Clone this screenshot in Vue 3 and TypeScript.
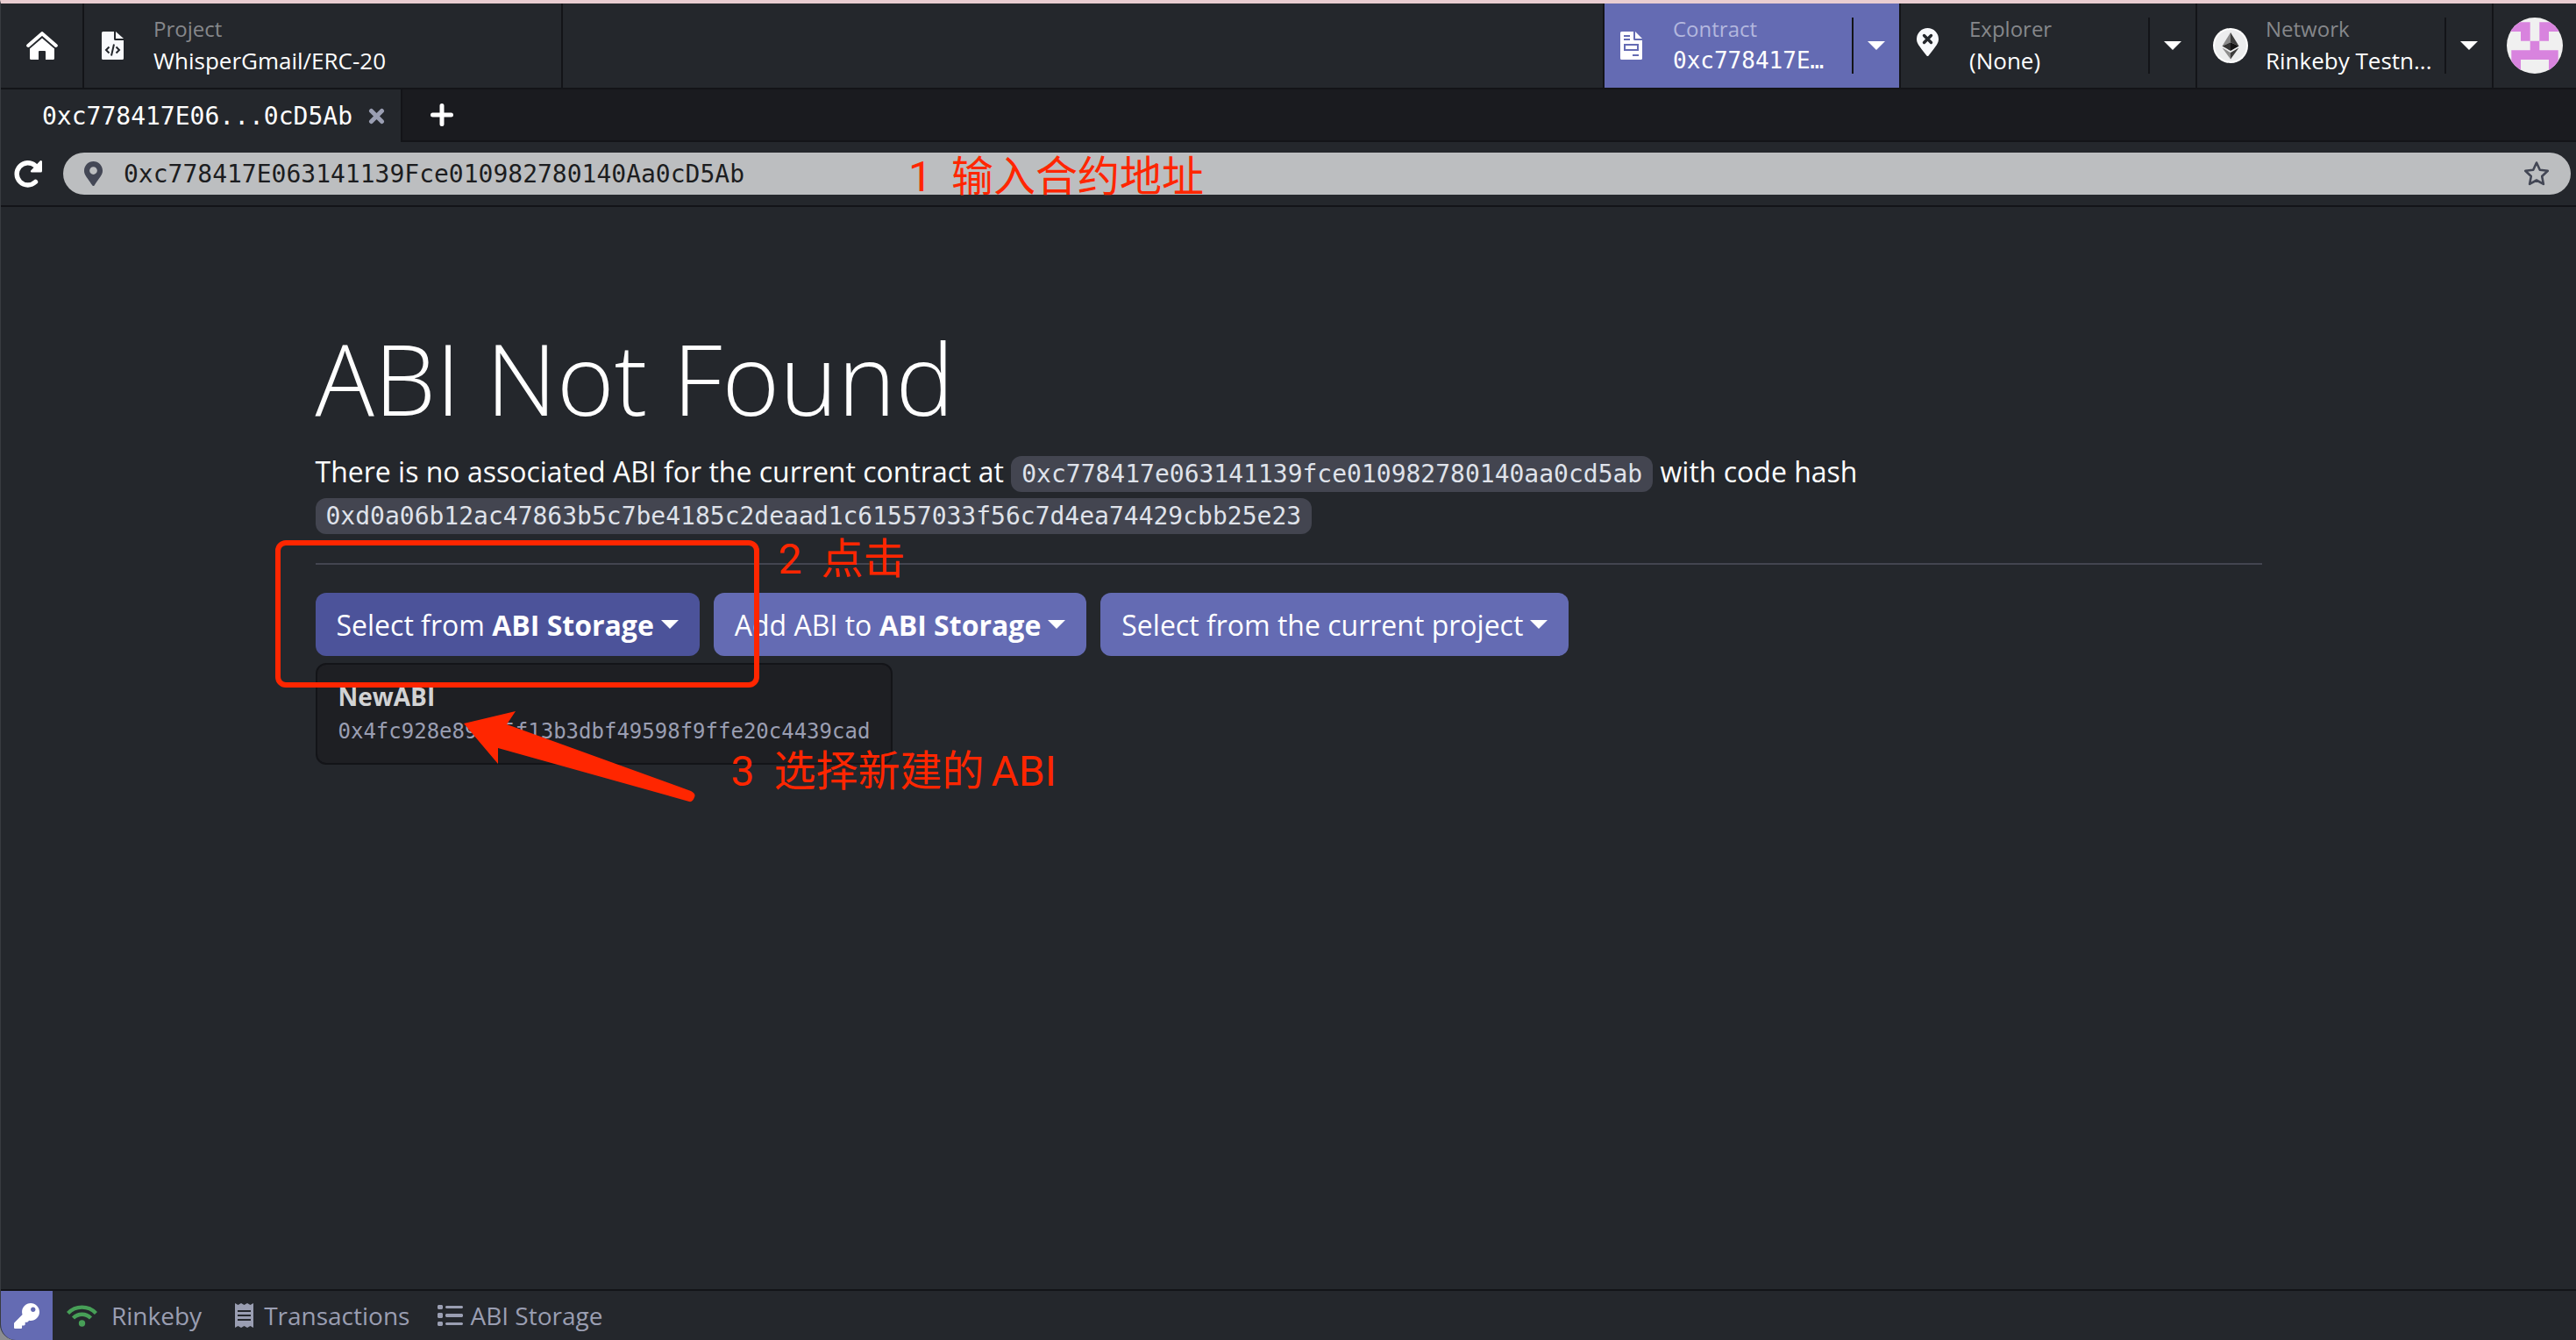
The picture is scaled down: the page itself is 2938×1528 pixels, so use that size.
<script setup lang="ts">
import { ref } from 'vue'

interface NavCell {
  id: string
  label: string
  value: string
  mono?: boolean
  active?: boolean
}

const address = ref('0xc778417E063141139Fce010982780140Aa0cD5Ab')

const cells: NavCell[] = [
  { id: 'contract', label: 'Contract', value: '0xc778417E…', mono: true, active: true },
  { id: 'explorer', label: 'Explorer', value: '(None)' },
  { id: 'network', label: 'Network', value: 'Rinkeby Testn...' },
]

const storedAbi = {
  name: 'NewABI',
  hash: '0x4fc928e89435f13b3dbf49598f9ffe20c4439cad',
}
</script>

<template>
  <div class="app">
    <header class="topbar">
      <button class="home" aria-label="Home">
        <svg width="36" height="32" viewBox="0 0 36 32">
          <path fill="none" stroke="#fff" stroke-width="4" stroke-linecap="round" stroke-linejoin="round" d="M2.200 16 18 2.200 33.800 16" />
          <path fill="#fff" d="M18 7.400 32 19.600V30.500a1.500 1.500 0 0 1-1.500 1.500H22v-9a1 1 0 0 0-1-1h-6a1 1 0 0 0-1 1v9H5.500A1.500 1.500 0 0 1 4 30.500V19.600z" />
        </svg>
      </button>

      <button class="project">
        <svg width="25" height="32" viewBox="0 0 25 32">
          <path fill="#f8f9fc" d="M1.500 0H14v8.500A1.500 1.500 0 0 0 15.500 10H25v20.500a1.500 1.500 0 0 1-1.500 1.500h-22A1.500 1.500 0 0 1 0 30.500v-29A1.500 1.500 0 0 1 1.500 0zM16 0l9 8H16z" />
          <path fill="none" stroke="#24272c" stroke-width="2" d="M8.500 17.500 5 21l3.500 3.500M16.500 17.500 20 21l-3.500 3.500M14 14.500 11 27.500" />
        </svg>
        <span class="stack">
          <span class="label">Project</span>
          <span class="value">WhisperGmail/ERC-20</span>
        </span>
      </button>

      <div class="spacer"></div>

      <div v-for="cell in cells" :key="cell.id" class="cell" :class="{ active: cell.active }">
        <button class="cell-main">
          <span class="cell-icon">
            <svg v-if="cell.id === 'contract'" width="25" height="32" viewBox="0 0 25 32">
              <path fill="#fff" fill-rule="evenodd" d="M1.500 0H15v8.500A1.500 1.500 0 0 0 16.500 10H25v20.500a1.500 1.500 0 0 1-1.500 1.500h-22A1.500 1.500 0 0 1 0 30.500v-29A1.500 1.500 0 0 1 1.500 0zM17 0l8 8h-8zM4 4v2h7V4zM4 8v2h7V8zM4 14v8h17v-8zM6 16h13v4H6zM14 26v2h7v-2z" />
            </svg>
            <svg v-else-if="cell.id === 'explorer'" class="pin" width="25" height="32" viewBox="0 0 25 32">
              <path fill="#f8f9fc" d="M12.500 0A12.500 12.500 0 0 0 0 12.500C0 17 2 19.500 11.200 31.300a1.700 1.700 0 0 0 2.600 0C23 19.500 25 17 25 12.500A12.500 12.500 0 0 0 12.500 0z" />
              <path stroke="#24272c" stroke-width="3.400" stroke-linecap="round" d="m8.500 8.500 8 8m0-8-8 8" />
            </svg>
            <svg v-else width="40" height="40" viewBox="0 0 40 40">
              <circle cx="20" cy="20" r="20" fill="#fff" />
              <circle cx="20" cy="20" r="18" fill="#ecedee" />
              <path fill="#8a8a8a" d="M20 5v11.300L10.500 20.600z" />
              <path fill="#3c3c3b" d="M20 5v11.300l9.500 4.300z" />
              <path fill="#343434" d="m10.500 20.600 9.500-4.300V26z" />
              <path fill="#131313" d="M29.500 20.600 20 16.300V26z" />
              <path fill="#8c8c8c" d="m10.500 22.600 9.500 5.400v7.500z" />
              <path fill="#3c3c3b" d="M29.500 22.600 20 28v7.500z" />
            </svg>
          </span>
          <span class="stack">
            <span class="label">{{ cell.label }}</span>
            <span class="value" :class="{ mono: cell.mono }">{{ cell.value }}</span>
          </span>
        </button>
        <button class="cell-toggle" :aria-label="`${cell.label} menu`"><span class="caret"></span></button>
      </div>

      <button class="account" aria-label="Account">
        <svg width="64" height="64" viewBox="0 0 64 64">
          <clipPath id="round"><circle cx="32" cy="32" r="32" /></clipPath>
          <g clip-path="url(#round)">
            <rect width="64" height="64" fill="#f0f0f0" />
            <path fill="#d883de" d="M0 5.300h26.700V26.700H16V16H0zM64 5.300H37.300V26.700H48V16h16zM26.700 26.700h10.600v10.600h21.400V64H48V48H16v16H5.300V37.300h21.400z" />
          </g>
        </svg>
      </button>
    </header>

    <nav class="tabs">
      <div class="tab">
        <button class="tab-name mono">0xc778417E06...0cD5Ab</button>
        <button class="tab-close" aria-label="Close tab">
          <svg width="19" height="19" viewBox="0 0 19 19" stroke="#9a9eb2" stroke-width="5" stroke-linecap="round"><path d="m3.500 3.500 12 12m0-12-12 12" /></svg>
        </button>
      </div>
      <div class="tab-rest">
        <button class="tab-add" aria-label="New tab">
          <svg width="26" height="26" viewBox="0 0 26 26" stroke="#fff" stroke-width="5" stroke-linecap="round"><path d="M13 2.500v21M2.500 13h21" /></svg>
        </button>
      </div>
    </nav>

    <div class="addressbar">
      <button class="reload" aria-label="Reload">
        <svg width="32" height="32" viewBox="0 0 32 32">
          <path fill="none" stroke="#fff" stroke-width="5.400" stroke-linecap="round" d="M24.500 25.400A12.600 12.600 0 1 1 24 6.800" />
          <path fill="#fff" d="M30.500 1c.8 0 1.500.6 1.500 1.400V13a1.500 1.500 0 0 1-1.500 1.500H20c-1 0-1.500-1.300-.8-2L29.600 1.400z" />
        </svg>
      </button>
      <div class="field">
        <svg width="21" height="28" viewBox="0 0 384 512" fill="#434755">
          <path d="M172.268 501.670C26.970 291.031 0 269.413 0 192 0 85.961 85.961 0 192 0s192 85.961 192 192c0 77.413-26.970 99.031-172.268 309.670-9.535 13.774-29.930 13.773-39.464 0zM192 272c44.183 0 80-35.817 80-80s-35.817-80-80-80-80 35.817-80 80 35.817 80 80 80z" />
        </svg>
        <input v-model="address" class="mono" type="text" aria-label="Contract address" spellcheck="false" />
        <button class="star" aria-label="Add to favourites">
          <svg width="30" height="30" viewBox="0 0 30 30" fill="none" stroke="#434755" stroke-width="2.600" stroke-linejoin="round"><path d="m15 2.500 3.800 8.200 9 1.100-6.600 6.200 1.700 8.900-7.900-4.400-7.900 4.400 1.700-8.900-6.600-6.200 9-1.100z" /></svg>
        </button>
        <p class="note note-1"><span>1</span><span>输入合约地址</span></p>
      </div>
    </div>

    <main class="page">
      <section class="content">
        <h1>ABI Not Found</h1>
        <p class="lead">
          There is no associated ABI for the current contract at
          <code>0xc778417e063141139fce010982780140aa0cd5ab</code> with code hash
          <code>0xd0a06b12ac47863b5c7be4185c2deaad1c61557033f56c7d4ea74429cbb25e23</code>
        </p>
        <hr />
        <div class="actions">
          <div class="dropdown">
            <button class="btn open" aria-expanded="true">Select from <b>ABI Storage</b><span class="caret"></span></button>
            <div class="menu">
              <button class="menu-item">
                <b>{{ storedAbi.name }}</b>
                <span class="mono">{{ storedAbi.hash }}</span>
              </button>
            </div>
          </div>
          <button class="btn">Add ABI to <b>ABI Storage</b><span class="caret"></span></button>
          <button class="btn">Select from the current project<span class="caret"></span></button>
        </div>

        <div class="frame"></div>
        <p class="note note-2"><span>2</span><span>点击</span></p>
        <svg class="arrow" width="264" height="104" viewBox="0 0 264 104" fill="#ff2600">
          <path d="M0 14 59 0 49 15 259 91Q265 94 263 98 261 104 257 103L39 42V60z" />
        </svg>
        <p class="note note-3"><span>3</span><span>选择新建的<i>ABI</i></span></p>
      </section>
    </main>

    <footer class="statusbar">
      <button class="key" aria-label="Keypair manager">
        <svg width="29" height="29" viewBox="0 0 512 512" fill="#fff">
          <path d="M512 176.001C512 273.203 433.202 352 336 352c-11.220 0-22.190-1.062-32.827-3.069l-24.012 27.014A23.999 23.999 0 0 1 261.223 384H224v40c0 13.255-10.745 24-24 24h-40v40c0 13.255-10.745 24-24 24H24c-13.255 0-24-10.745-24-24v-78.059c0-6.365 2.529-12.470 7.029-16.971l161.802-161.802C163.108 213.814 160 195.271 160 176 160 78.798 238.797.001 335.999 0 433.488-.001 512 78.511 512 176.001zM336 128c0 26.510 21.490 48 48 48s48-21.490 48-48-21.490-48-48-48-48 21.490-48 48z" />
        </svg>
      </button>
      <a class="status network" href="#network">
        <svg width="35" height="26" viewBox="0 0 35 26" fill="none" stroke="#479f57" stroke-width="4.400">
          <path d="M1.500 10.500a22 22 0 0 1 32 0M7.500 16a14 14 0 0 1 20 0" />
          <circle cx="17.500" cy="22" r="3.700" fill="#479f57" stroke="none" />
        </svg>
        Rinkeby
      </a>
      <a class="status transactions" href="#transactions">
        <svg width="21" height="28" viewBox="0 0 21 28" fill="#9a9eb2">
          <path fill-rule="evenodd" d="M0 0 3.500 2 7 0l3.500 2L14 0l3.500 2L21 0v28l-3.500-2-3.500 2-3.500-2L7 28l-3.500-2L0 28zM3 8v2h15V8zM3 13v2h15v-2zM3 18v2h15v-2z" />
        </svg>
        Transactions
      </a>
      <a class="status storage" href="#abi">
        <svg width="29" height="24" viewBox="0 0 29 24" fill="#9a9eb2">
          <path d="M1 0h4l1 1v3L5 5H1L0 4V1zM1 9h4l1 1v4l-1 1H1l-1-1v-4zM1 19h4l1 1v3l-1 1H1l-1-1v-3zM10 1h18l1 1v1l-1 1H10L9 3V2zM10 10h18l1 1v2l-1 1H10l-1-1v-2zM10 20h18l1 1v1l-1 1H10l-1-1v-1z" />
        </svg>
        ABI Storage
      </a>
    </footer>
  </div>
</template>

<style>
body {
  margin: 0;
  background: #8b8d91;
}
</style>

<style scoped>
.app {
  display: flex;
  flex-direction: column;
  min-height: 100vh;
  box-sizing: border-box;
  overflow: hidden;
  border-top: 4px solid #e9cdd1;
  border-left: 1px solid #383b40;
  border-bottom-left-radius: 18px;
  background: #24272c;
  color: #fff;
  font-family: "Open Sans", "Noto Sans", "Noto Sans CJK SC", sans-serif;
  font-size: 28px;
}
button {
  margin: 0;
  padding: 0;
  border: 0;
  background: none;
  color: inherit;
  font: inherit;
  text-align: left;
  cursor: pointer;
}
svg {
  display: block;
  flex: none;
}
.mono,
code {
  font-family: "DejaVu Sans Mono", monospace;
}
.caret {
  display: inline-block;
  border: 10px solid transparent;
  border-top-color: #fff;
  border-bottom: 0;
}

/* Top bar */
.topbar {
  display: flex;
  height: 96px;
  border-bottom: 2px solid #131418;
}
.home,
.account {
  display: flex;
  flex: none;
  align-items: center;
  justify-content: center;
}
.home {
  width: 93px;
}
.account {
  width: 96px;
  border-left: 2px solid #131418;
}
.project {
  display: flex;
  align-items: center;
  gap: 34px;
  width: 548px;
  padding-left: 20px;
  border: solid #131418;
  border-width: 0 2px;
}
.spacer {
  flex: 1;
}
.stack {
  display: flex;
  flex-direction: column;
  padding-bottom: 2px;
  white-space: nowrap;
}
.label {
  color: #86878b;
  font-size: 24px;
  line-height: 36px;
}
.value {
  font-size: 26px;
  line-height: 36px;
}
.cell {
  display: flex;
  align-items: center;
  width: 336px;
  border-left: 2px solid #131418;
}
.cell.active {
  background: #646bb3;
}
.cell.active .label {
  color: #b3b7de;
}
.cell-main {
  display: flex;
  flex: 1;
  align-items: center;
}
.cell-icon {
  display: flex;
  width: 60px;
  margin-left: 18px;
}
.cell-icon .pin {
  padding-bottom: 8px;
}
.cell-toggle {
  display: flex;
  justify-content: center;
  align-items: center;
  width: 54px;
  height: 64px;
  border-left: 2px solid #131418;
}

/* Tabs */
.tabs {
  display: flex;
  height: 60px;
}
.tab {
  display: flex;
  align-items: center;
  gap: 18px;
  padding: 0 18px 0 47px;
  border-right: 2px solid #131418;
}
.tab-rest {
  display: flex;
  flex: 1;
  align-items: center;
  padding-left: 32px;
  border-bottom: 2px solid #131418;
  background: #1a1b1f;
}

/* Address bar */
.addressbar {
  display: flex;
  align-items: center;
  gap: 24px;
  height: 72px;
  padding: 0 6px 0 15px;
  border-bottom: 2px solid #131418;
}
.field {
  position: relative;
  display: flex;
  flex: 1;
  align-items: center;
  height: 48px;
  padding: 0 24px;
  border-radius: 24px;
  background: #bcbec0;
}
.field input {
  flex: 1;
  min-width: 0;
  height: 48px;
  padding: 0 24px;
  border: 0;
  outline: 0;
  background: none;
  color: #1c1d20;
  font-size: 28px;
}

/* Page */
.page {
  flex: 1;
  padding: 128px 180px;
}
.content {
  position: relative;
  max-width: 2220px;
  margin: 0 auto;
}
h1 {
  margin: 0 0 16px;
  font-size: 112px;
  font-weight: 300;
  line-height: 134px;
}
.lead {
  max-width: 1800px;
  margin: 0;
  font-size: 32px;
  line-height: 48px;
}
code {
  padding: 4px 12px;
  border-radius: 12px;
  background: #434550;
  color: #dfe2ea;
  font-size: 28px;
  line-height: 32px;
}
hr {
  height: 2px;
  margin: 32px 0;
  border: 0;
  background: #434550;
}
.actions {
  display: flex;
  flex-wrap: wrap;
  gap: 16px;
}
.dropdown {
  position: relative;
}
.btn {
  height: 72px;
  padding: 0 24px;
  border-radius: 12px;
  background: #646bb3;
  font-size: 32px;
  white-space: nowrap;
}
.btn.open {
  background: #4c539a;
}
.btn .caret {
  margin-left: 8px;
  vertical-align: 8px;
}
.menu {
  position: absolute;
  top: 80px;
  left: 0;
  padding: 16px 24px;
  border: 2px solid #131418;
  border-radius: 12px;
  background: #1e1f23;
}
.menu-item {
  display: flex;
  flex-direction: column;
  color: #d2d3d4;
  line-height: 40px;
}
.menu-item span {
  color: #9a9eb2;
  font-size: 24px;
}

/* Red walkthrough marks */
.note {
  position: absolute;
  display: flex;
  gap: 22px;
  margin: 0;
  color: #ff2600;
  font-family: Roboto, "Noto Sans CJK SC", sans-serif;
  font-size: 48px;
  font-weight: 400;
  line-height: 56px;
  white-space: nowrap;
  pointer-events: none;
}
.note i {
  margin-left: 8px;
  font-style: normal;
}
.note-1 {
  top: 0;
  left: 964px;
}
.note-2 {
  top: 246px;
  left: 528px;
}
.note-3 {
  top: 488px;
  left: 474px;
}
.frame {
  position: absolute;
  top: 252px;
  left: -46px;
  width: 540px;
  height: 156px;
  border: 6px solid #ff2600;
  border-radius: 12px;
  pointer-events: none;
}
.arrow {
  position: absolute;
  top: 447px;
  left: 169px;
  pointer-events: none;
}

/* Status bar */
.statusbar {
  display: flex;
  align-items: center;
  height: 56px;
  border-top: 2px solid #131418;
  color: #9a9eb2;
}
.key {
  display: flex;
  align-items: center;
  justify-content: center;
  align-self: stretch;
  width: 59px;
  background: #646bb3;
}
.status {
  display: flex;
  align-items: center;
  gap: 16px;
  color: inherit;
  text-decoration: none;
}
.network {
  margin-left: 16px;
}
.transactions {
  gap: 12px;
  margin-left: 38px;
}
.storage {
  gap: 8px;
  margin-left: 32px;
}
</style>
